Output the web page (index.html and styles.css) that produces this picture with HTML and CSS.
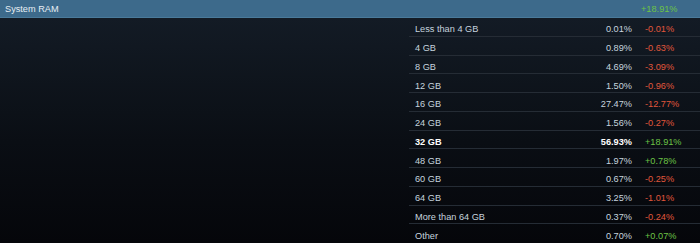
FILE: index.html
```html
<!DOCTYPE html>
<html>
<head>
<meta charset="utf-8">
<link rel="stylesheet" href="styles.css">
</head>
<body>
<div class="panel">
  <div class="header">
    <div class="title">System RAM</div>
    <div class="change pos">+18.91%</div>
  </div>
  <div class="body">
    <div class="spacer"></div>
    <div class="table">
      <div class="row"><span class="label">Less than 4 GB</span><span class="pct">0.01%</span><span class="change neg">-0.01%</span></div>
      <div class="row"><span class="label">4 GB</span><span class="pct">0.89%</span><span class="change neg">-0.63%</span></div>
      <div class="row"><span class="label">8 GB</span><span class="pct">4.69%</span><span class="change neg">-3.09%</span></div>
      <div class="row"><span class="label">12 GB</span><span class="pct">1.50%</span><span class="change neg">-0.96%</span></div>
      <div class="row"><span class="label">16 GB</span><span class="pct">27.47%</span><span class="change neg">-12.77%</span></div>
      <div class="row"><span class="label">24 GB</span><span class="pct">1.56%</span><span class="change neg">-0.27%</span></div>
      <div class="row highlight"><span class="label">32 GB</span><span class="pct">56.93%</span><span class="change pos">+18.91%</span></div>
      <div class="row"><span class="label">48 GB</span><span class="pct">1.97%</span><span class="change pos">+0.78%</span></div>
      <div class="row"><span class="label">60 GB</span><span class="pct">0.67%</span><span class="change neg">-0.25%</span></div>
      <div class="row"><span class="label">64 GB</span><span class="pct">3.25%</span><span class="change neg">-1.01%</span></div>
      <div class="row"><span class="label">More than 64 GB</span><span class="pct">0.37%</span><span class="change neg">-0.24%</span></div>
      <div class="row"><span class="label">Other</span><span class="pct">0.70%</span><span class="change pos">+0.07%</span></div>
    </div>
  </div>
</div>
</body>
</html>
```
FILE: styles.css
```css
html, body {
  margin: 0;
  padding: 0;
  background: #06070a;
}
body {
  width: 700px;
  height: 243px;
  overflow: hidden;
  font-family: "Liberation Sans", Arial, sans-serif;
  font-size: 9.2px;
  color: #c6d4df;
}
.panel {
  display: flex;
  flex-direction: column;
}
.header {
  height: 18px;
  box-sizing: border-box;
  background: #3d6a8b;
  border-bottom: 1px solid #4a7a9a;
  display: grid;
  grid-template-columns: 1fr 59px;
  align-items: center;
  padding-left: 5px;
  color: #e6eef4;
}
.body {
  display: flex;
  height: 225px;
  background: linear-gradient(to bottom, #131b25 0%, #0a0e14 55%, #05060a 100%);
}
.spacer {
  width: 409px;
  flex: none;
}
.table {
  flex: 1;
  display: flex;
  flex-direction: column;
}
.row {
  height: 18.75px;
  box-sizing: border-box;
  border-bottom: 1px solid #252c35;
  display: grid;
  grid-template-columns: 1fr 60px 68px;
  align-items: center;
  padding-left: 6px;
  padding-top: 5px;
}
.row:last-child {
  border-bottom: none;
}
.pct {
  text-align: right;
}
.row .change {
  padding-left: 13px;
}
.highlight .label,
.highlight .pct {
  font-weight: bold;
  color: #ffffff;
}
.neg {
  color: #e0573c;
}
.pos {
  color: #6cc346;
}
```
